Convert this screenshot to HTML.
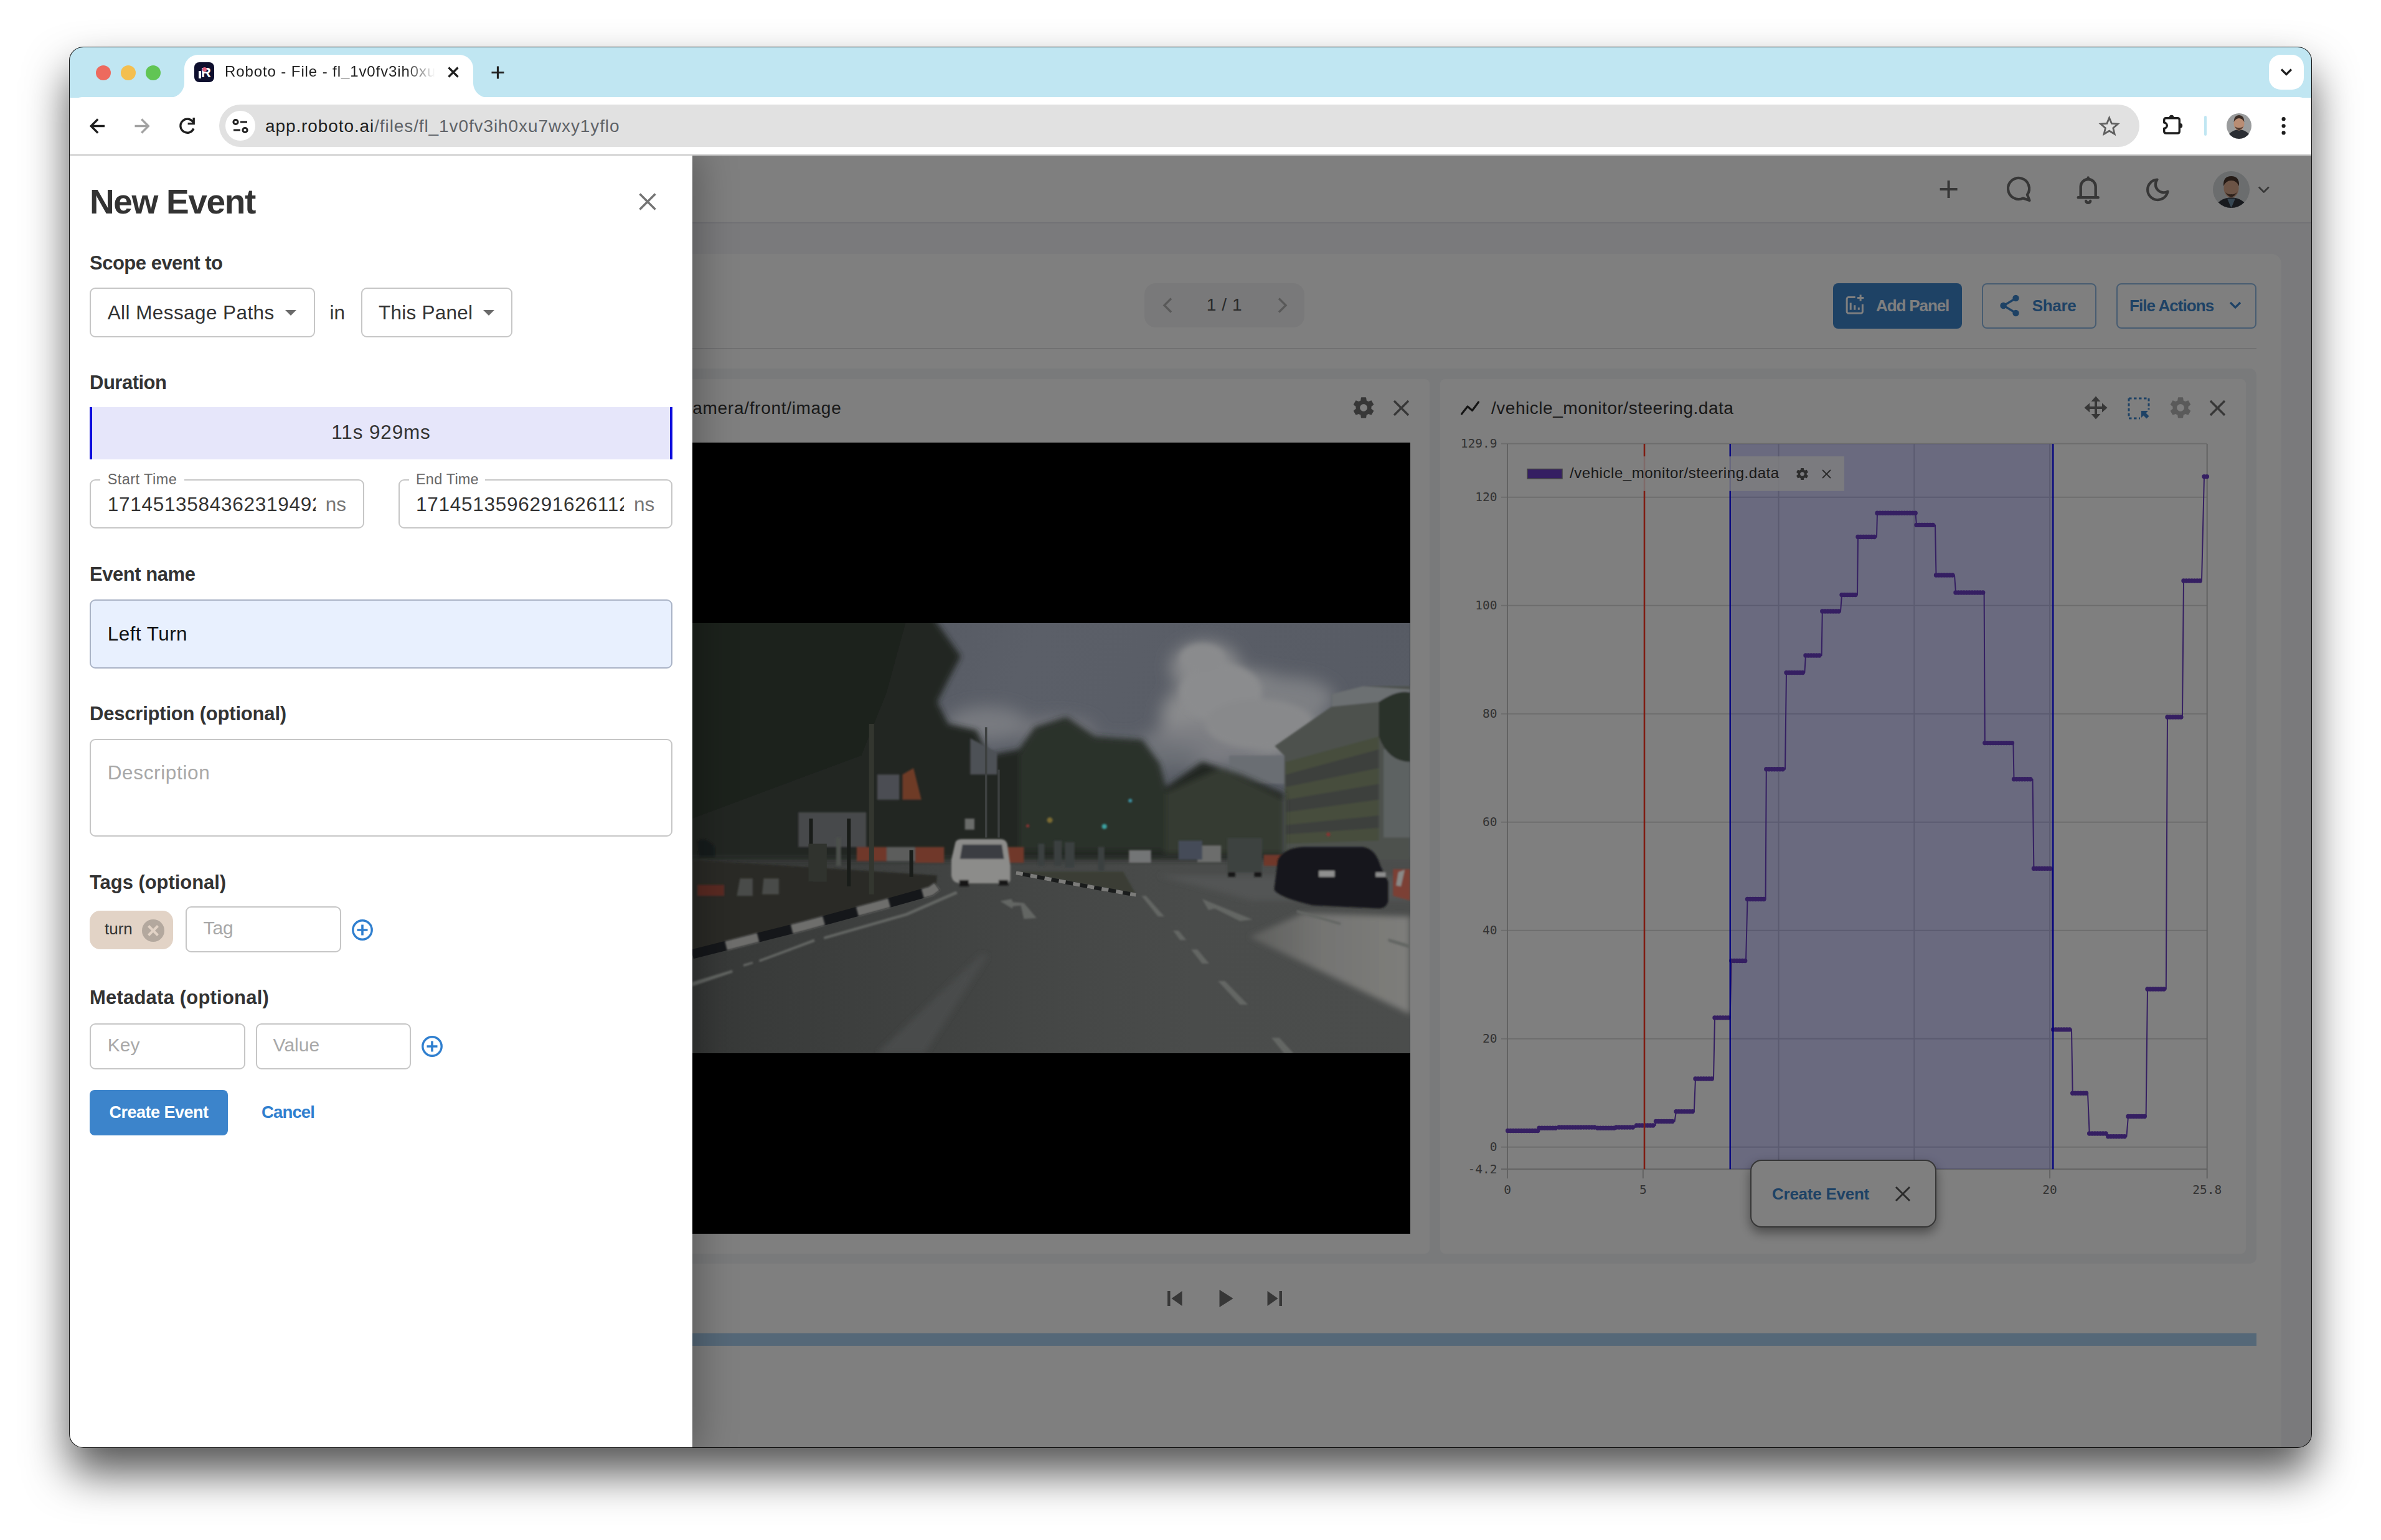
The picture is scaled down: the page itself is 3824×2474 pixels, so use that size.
<!DOCTYPE html>
<html lang="en">
<head>
<meta charset="utf-8">
<title>Roboto - File - fl_1v0fv3ih0xu7wxy1yflo</title>
<style>
*{box-sizing:border-box;margin:0;padding:0}
html,body{width:3824px;height:2474px;overflow:hidden;background:#fff}
body{font-family:"Liberation Sans",Arial,sans-serif;color:#333;position:relative}
.a{position:absolute}
.t{position:absolute;white-space:nowrap;line-height:1}
svg{position:absolute;overflow:visible}
#win{left:112px;top:75px;width:3600px;height:2251px;border-radius:22px;background:#fff;
 box-shadow:0 40px 70px rgba(0,0,0,.67)}
#ring{left:-1px;top:0;width:3602px;height:2251px;border-radius:23px/22px;box-shadow:inset 0 0 0 1px rgba(0,0,0,.88);pointer-events:none;z-index:50}
#clip{left:0;top:0;width:3600px;height:2251px;border-radius:22px;overflow:hidden}
/* ---------- chrome ---------- */
#tabstrip{left:0;top:0;width:3600px;height:82px;background:#c0e6f2}
#toolbar{left:0;top:81px;width:3600px;height:93px;background:#fff;border-radius:20px 20px 0 0}
#tbline{left:0;top:173px;width:3600px;height:2px;background:#c9c9c9}
#tab{left:184px;top:13px;width:464px;height:70px;background:#fff;border-radius:22px 22px 0 0}
#tab:before,#tab:after{content:"";position:absolute;bottom:1px;width:24px;height:24px;background:radial-gradient(circle at 0 0,rgba(255,255,255,0) 23.5px,#fff 24.5px)}
#tab:before{left:-24px}
#tab:after{right:-24px;transform:scaleX(-1)}
.tl{width:24px;height:24px;border-radius:50%;top:29.5px}
#omni{left:240px;top:93px;width:3084px;height:68px;border-radius:34px;background:#e1e1e1}
#tsearch{left:3532px;top:13px;width:56px;height:56px;border-radius:18px;background:#fff}
/* ---------- app (under overlay) ---------- */
#content{left:0;top:175px;width:3600px;height:2076px;overflow:hidden}
#app{left:0;top:0;width:3600px;height:2076px;background:#f4f5f8;overflow:hidden}
#overlay{left:0;top:0;width:3600px;height:2076px;background:rgba(0,0,0,.5)}
/* ---------- dialog ---------- */
#dlg{left:0;top:0;width:1000px;height:2076px;background:#fff;box-shadow:0 0 60px 8px rgba(0,0,0,.3)}
.lbl{font-weight:bold;font-size:31px;color:#333;left:32px}
.box{position:absolute;border:2px solid #c6c6c6;border-radius:9px;background:#fff}
.ph{color:#a8a8a8}
</style>
</head>
<body>
<div id="win" class="a">
  <div id="ring" class="a"></div>
  <div id="clip" class="a">
  <!-- ======= CHROME ======= -->
  <div id="tabstrip" class="a"></div>
  <div id="toolbar" class="a"></div>
  <div id="tbline" class="a"></div>
  <div class="a tl" style="left:42px;background:#ed6a5e"></div>
  <div class="a tl" style="left:82px;background:#f4bf4f"></div>
  <div class="a tl" style="left:122px;background:#61c554"></div>
  <div id="tab" class="a"></div>

  <!-- favicon -->
  <div class="a" style="left:200px;top:25px;width:32px;height:32px;border-radius:8px;background:#0e0f2e"></div>
  <div class="a" style="left:207px;top:39px;width:4px;height:12px;background:#fff"></div>
  <div class="t" style="left:211px;top:31px;font-size:22px;font-weight:bold;color:#fff">R</div>
  <div class="a" style="left:213px;top:33px;width:7px;height:7px;border-radius:50%;background:#e0607e"></div>
  <!-- tab title -->
  <div class="t" id="tabtitle" style="left:249px;top:28.3px;font-size:24px;letter-spacing:.9px;color:#1f1f1f;width:340px;overflow:hidden;-webkit-mask-image:linear-gradient(90deg,#000 290px,transparent 338px);mask-image:linear-gradient(90deg,#000 290px,transparent 338px)">Roboto - File - fl_1v0fv3ih0xu7wxy1yflo</div>
  <svg style="left:0;top:0" width="3600" height="175" viewBox="0 0 3600 175" fill="none" stroke="#1f1f1f" stroke-width="3.4">
    <!-- tab close / new tab -->
    <path d="M608.5 33.5 L623.5 48.5 M623.5 33.5 L608.5 48.5" stroke-width="3.2"/>
    <path d="M677.5 41.5 H697.5 M687.5 31.5 V51.5" stroke-width="3.2"/>
    <!-- tab search chevron -->
    <rect x="3532" y="13" width="56" height="56" rx="19" fill="#fff" stroke="none"/>
    <path d="M3552 36.5 L3560 44.5 L3568 36.5" stroke-width="3.2"/>
    <!-- back / forward / reload -->
    <path d="M56 127.5 H34.5 M45.2 116.5 L34.2 127.5 L45.2 138.5"/>
    <path d="M104.5 127.5 H126 M115.3 116.5 L126.3 127.5 L115.3 138.5" stroke="#a2a2a2"/>
    <path d="M198.3 121.5 A11 11 0 1 0 199 131.5" />
    <path d="M199.2 114 V123.6 H189.6" />
    <!-- omnibox -->
    <rect x="240" y="93" width="3084" height="68" rx="34" fill="#e1e1e1" stroke="none"/>
    <circle cx="274" cy="127" r="24" fill="#fff" stroke="none"/>
    <g stroke-width="3">
      <circle cx="266.5" cy="121" r="3.6"/><path d="M274 121 H285"/>
      <circle cx="281.5" cy="134" r="3.6"/><path d="M263 134 H274"/>
    </g>
    <!-- star -->
    <path d="M3275.6 114.2 L3279.4 123.4 L3289.3 124.2 L3281.8 130.7 L3284.1 140.4 L3275.6 135.2 L3267.1 140.4 L3269.4 130.7 L3261.9 124.2 L3271.8 123.4 Z" stroke="#5f5f5f" stroke-width="2.8" stroke-linejoin="miter"/>
    <!-- extensions puzzle -->
    <path d="M3363.7 122 V117.700 Q3363.7 114.7 3366.7 114.7 H3385.3 Q3388.3 114.7 3388.3 117.7 V136 Q3388.3 139 3385.3 139 H3366.7 Q3363.7 139 3363.7 136 V131.2 A4.6 4.6 0 0 0 3363.7 122 Z" stroke-linejoin="round" stroke-width="3.4"/>
    <path d="M3371.8 113.600 A3.8 3.8 0 0 1 3379.4 113.600Z M3389.4 123.1 A3.8 3.8 0 0 1 3389.4 130.7Z" fill="#1f1f1f" stroke="none"/>
    <!-- divider -->
    <rect x="3428" y="111" width="4" height="32" rx="2" fill="#c0e6f2" stroke="none"/>
    <!-- chrome avatar -->
    <circle cx="3484" cy="127" r="20" fill="#9a9c9d" stroke="none"/>
    <path d="M3468 140 Q3484 126 3500 140 A20 20 0 0 1 3468 140Z" fill="#2a2d33" stroke="none"/>
    <ellipse cx="3484" cy="124" rx="8.5" ry="10.5" fill="#b98d74" stroke="none"/>
    <path d="M3475.5 121 Q3476 110 3484 110 Q3492 110 3492.5 121 Q3489 115 3484 115 Q3479 115 3475.5 121Z" fill="#3a2c25" stroke="none"/>
    <path d="M3477 128 Q3484 140 3491 128 Q3484 133 3477 128Z" fill="#4a372e" stroke="none"/>
    <!-- menu dots -->
    <g fill="#1f1f1f" stroke="none"><circle cx="3555.6" cy="116.2" r="3.1"/><circle cx="3555.6" cy="127.3" r="3.1"/><circle cx="3555.6" cy="138.4" r="3.1"/></g>
  </svg>
  <div class="t" style="left:314px;top:113.5px;font-size:28px;letter-spacing:.9px;color:#1f1f1f">app.roboto.ai<span style="color:#5f6368">/files/fl_1v0fv3ih0xu7wxy1yflo</span></div>

  <!-- ======= APP ======= -->
  <div id="content" class="a">
  <div id="app" class="a">
<div class="a" style="left:0.0px;top:0.0px;width:3600.0px;height:109.0px;background:#fff;border-bottom:2px solid #e4e5ec"></div>
<svg style="left:0;top:0" width="3600" height="108" viewBox="0 0 3600 108" fill="none" stroke="#6e6e6e" stroke-width="4" stroke-linecap="round" stroke-linejoin="round">
<path d="M3017.6 40 V68 M3003.6 54 H3031.6" stroke-linecap="butt" stroke-width="4"/>
<path d="M3143.9 62.8 A17 17 0 1 0 3137.2 68.4 L3147.5 72 Z" stroke-width="4.2"/>
<path d="M3225.7 67.200 H3257.7 M3229.7 67.200 V50 A12 12 0 0 1 3253.7 50 V67.200 M3241.7 38 V35.5 M3238.2 73 A3.6 3.6 0 0 0 3245.2 73" stroke-width="4.400"/>
<path d="M3352.5 38.5 A16.3 16.3 0 1 0 3369.5 57.5 A13 13 0 0 1 3352.5 38.5 Z" stroke-width="4.200"/>
<path d="M3515.8 50.5 L3523.8 58.5 L3531.8 50.5" stroke-width="2.6" stroke-linecap="butt"/>
</svg>
<svg style="left:3442px;top:24.5px" width="59" height="59" viewBox="0 0 59 59">
<defs><clipPath id="avc"><circle cx="29.5" cy="29.5" r="29.5"/></clipPath></defs>
<g clip-path="url(#avc)"><rect width="59" height="59" fill="#d6dadc"/>
<path d="M4 59 Q8 44 29.5 42 Q51 44 55 59Z" fill="#30343c"/>
<path d="M23 44 L29.5 59 L36 44Z" fill="#6f8fa6"/>
<ellipse cx="29.5" cy="27" rx="12" ry="15.5" fill="#d9a88c"/>
<path d="M17 24 Q16 8 29.5 8 Q43 8 42 24 Q38 15 29.5 15 Q21 15 17 24Z" fill="#4a362c"/>
<path d="M18.5 31 Q29.5 52 40.5 31 Q37 38 29.5 37 Q22 38 18.5 31Z" fill="#5b4336"/>
</g></svg>
<div class="a" style="left:560.0px;top:158.0px;width:2992.0px;height:2142.0px;background:#fff;border-radius:16px"></div>
<div class="a" style="left:1726.0px;top:204.6px;width:257.0px;height:71.4px;background:#f3f3f4;border-radius:18px"></div>
<svg style="left:1726px;top:204px" width="257" height="72" viewBox="0 0 257 72" fill="none" stroke="#b2b2b2" stroke-width="3.4"><path d="M43 25.5 L32 36.5 L43 47.5"/><path d="M216 25.5 L227 36.5 L216 47.5"/></svg>
<div class="t" style="left:1854.5px;transform:translateX(-50%);top:225.8px;font-size:28px;color:#555;letter-spacing:.6px">1 / 1</div>
<div class="a" style="left:2832.0px;top:205.0px;width:206.8px;height:72.5px;background:#3c84cb;border-radius:8px"></div>
<svg style="left:2849px;top:222px" width="35.5" height="35.5" viewBox="0 0 38 38" fill="none" stroke="#fff" stroke-width="3.2">
<path d="M20 6 H8.5 A3 3 0 0 0 5.500 9 V30.5 A3 3 0 0 0 8.5 33.500 H29.500 A3 3 0 0 0 32.500 30.5 V18"/>
<path d="M12 27.5 V15.500 M19 27.5 V19.5 M26 27.5 V23.5"/><path d="M29 1.500 V12.500 M23.500 7 H34.500"/></svg>
<div class="t" style="left:2901.0px;top:228.3px;font-size:26px;color:#fff;font-weight:bold;letter-spacing:-1.1px">Add Panel</div>
<div class="a" style="left:3071.0px;top:205.0px;width:183.5px;height:72.5px;border:2px solid #8fb9e3;border-radius:8px;background:#fff"></div>
<svg style="left:3098px;top:222px" width="36" height="38" viewBox="0 0 36 38" fill="#3c84cb" stroke="#3c84cb" stroke-width="3.4">
<path d="M27 7.5 L8 19 L27 30.5" fill="none"/><circle cx="27.5" cy="7" r="4" stroke="none" /><circle cx="27.5" cy="7" r="5.2" stroke="none"/><circle cx="7.5" cy="19" r="5.2" stroke="none"/><circle cx="27.5" cy="31" r="5.2" stroke="none"/></svg>
<div class="t" style="left:3151.7px;top:228.3px;font-size:26px;color:#3c84cb;font-weight:bold;letter-spacing:-.33px">Share</div>
<div class="a" style="left:3287.0px;top:205.0px;width:224.5px;height:72.5px;border:2px solid #8fb9e3;border-radius:8px;background:#fff"></div>
<div class="t" style="left:3308.0px;top:228.3px;font-size:26px;color:#3c84cb;font-weight:bold;letter-spacing:-.93px">File Actions</div>
<svg style="left:3466px;top:232px" width="24" height="16" viewBox="0 0 24 16" fill="none" stroke="#3c84cb" stroke-width="3.2"><path d="M4 4 L12 12 L20 4"/></svg>
<div class="a" style="left:560.0px;top:309.0px;width:2952.0px;height:2.0px;background:#e2e2e4"></div>
<div class="a" style="left:600.0px;top:342.0px;width:2912.0px;height:1438.0px;background:#f3f4f7;border-radius:10px"></div>
<div class="a" style="left:616.0px;top:359.0px;width:1568.0px;height:1404.6px;background:#fff;border-radius:8px"></div>
<div class="t" style="left:1000.3px;top:391.8px;font-size:28px;color:#333;letter-spacing:.7px">amera/front/image</div>
<div class="t" style="right:2600.0px;top:391.8px;font-size:28px;color:#333;letter-spacing:.7px">/c</div>
<svg style="left:2058.0px;top:385.0px" width="40" height="40" viewBox="0 0 24 24"><path fill="#6e6e6e" d="M19.43 12.98c.04-.32.07-.64.07-.98s-.03-.66-.07-.98l2.11-1.65c.19-.15.24-.42.12-.64l-2-3.46c-.12-.22-.39-.3-.61-.22l-2.49 1c-.52-.4-1.08-.73-1.69-.98l-.38-2.65C14.46 2.18 14.25 2 14 2h-4c-.25 0-.46.18-.49.42l-.38 2.65c-.61.25-1.17.59-1.69.98l-2.49-1c-.23-.09-.49 0-.61.22l-2 3.46c-.13.22-.07.49.12.64l2.11 1.65c-.04.32-.07.65-.07.98s.03.66.07.98l-2.11 1.65c-.19.15-.24.42-.12.64l2 3.46c.12.22.39.3.61.22l2.49-1c.52.4 1.08.73 1.69.98l.38 2.65c.03.24.24.42.49.42h4c.25 0 .46-.18.49-.42l.38-2.65c.61-.25 1.17-.59 1.69-.98l2.49 1c.23.09.49 0 .61-.22l2-3.46c.12-.22.07-.49-.12-.64l-2.11-1.65zM12 15.5c-1.93 0-3.5-1.57-3.5-3.5s1.570-3.5 3.5-3.500 3.500 1.570 3.500 3.500-1.570 3.500-3.500 3.500z"/></svg>
<svg style="left:2126.5px;top:393.5px" width="23.0" height="23.0" viewBox="0 0 23.0 23.0"><path d="M0 0 L23.0 23.0 M23.0 0 L0 23.0" stroke="#6e6e6e" stroke-width="3.4" fill="none"/></svg>
<div class="a" style="left:616.0px;top:460.6px;width:1536.6px;height:1271.4px;background:#000"></div>
<div class="a" style="left:2201.0px;top:359.0px;width:1294.0px;height:1404.6px;background:#fff;border-radius:8px"></div>
<svg style="left:2232px;top:390px" width="34" height="30" viewBox="0 0 34 30" fill="none" stroke="#2b2b2b" stroke-width="3.2" stroke-linejoin="round" stroke-linecap="round"><path d="M3.5 25 L13 13 L20.5 19.5 L30.500 6"/></svg>
<div class="t" style="left:2283.0px;top:391.8px;font-size:28px;color:#333;letter-spacing:.53px">/vehicle_monitor/steering.data</div>
<svg style="left:2234px;top:385px" width="0" height="0"></svg>
<svg style="left:3234px;top:385px" width="40" height="40" viewBox="0 0 40 40" fill="#6e6e6e" stroke="none">
<path d="M20 1.5 L27.5 10 H22 V18 H30 V12.5 L38.5 20 L30 27.5 V22 H22 V30 H27.5 L20 38.500 L12.500 30 H18 V22 H10 V27.500 L1.500 20 L10 12.500 V18 H18 V10 H12.500 Z"/></svg>
<svg style="left:3305px;top:388px" width="36" height="36" viewBox="0 0 36 36" fill="none" stroke="#3c84cb" stroke-width="3">
<path d="M2 2 H34 V20 M2 2 V34 H20" stroke-dasharray="4.500 3.500"/><path d="M22 22 H33 L29.500 25.5 L34.500 30.500 L30.500 34.500 L25.500 29.500 L22 33 Z" fill="#3c84cb" stroke="none"/></svg>
<svg style="left:3369.8px;top:385.0px" width="40" height="40" viewBox="0 0 24 24"><path fill="#b4b4b4" d="M19.43 12.98c.04-.32.07-.64.07-.98s-.03-.66-.07-.98l2.11-1.65c.19-.15.24-.42.12-.64l-2-3.46c-.12-.22-.39-.3-.61-.22l-2.49 1c-.52-.4-1.08-.73-1.69-.98l-.38-2.65C14.46 2.18 14.25 2 14 2h-4c-.25 0-.46.18-.49.42l-.38 2.65c-.61.25-1.17.59-1.69.98l-2.49-1c-.23-.09-.49 0-.61.22l-2 3.46c-.13.22-.07.49.12.64l2.11 1.65c-.04.32-.07.65-.07.98s.03.66.07.98l-2.11 1.65c-.19.15-.24.42-.12.64l2 3.46c.12.22.39.3.61.22l2.49-1c.52.4 1.08.73 1.69.98l.38 2.65c.03.24.24.42.49.42h4c.25 0 .46-.18.49-.42l.38-2.65c.61-.25 1.17-.59 1.69-.98l2.49 1c.23.09.49 0 .61-.22l2-3.46c.12-.22.07-.49-.12-.64l-2.11-1.65zM12 15.5c-1.93 0-3.5-1.57-3.5-3.5s1.570-3.5 3.5-3.500 3.500 1.570 3.500 3.500-1.570 3.500-3.500 3.500z"/></svg>
<svg style="left:3438.3px;top:393.5px" width="23.0" height="23.0" viewBox="0 0 23.0 23.0"><path d="M0 0 L23.0 23.0 M23.0 0 L0 23.0" stroke="#6e6e6e" stroke-width="3.4" fill="none"/></svg>
<svg style="left:0;top:0" width="3600" height="2076" viewBox="0 0 3600 2076" font-family="DejaVu Sans Mono, Liberation Mono, monospace" font-size="19.5" fill="#666">
<path d="M2299.0 462.7 H3432.7" stroke="#dadada" stroke-width="2"/>
<path d="M2299.0 548.8 H3432.7" stroke="#dadada" stroke-width="2"/>
<path d="M2299.0 722.8 H3432.7" stroke="#dadada" stroke-width="2"/>
<path d="M2299.0 896.8 H3432.7" stroke="#dadada" stroke-width="2"/>
<path d="M2299.0 1070.8 H3432.7" stroke="#dadada" stroke-width="2"/>
<path d="M2299.0 1244.8 H3432.7" stroke="#dadada" stroke-width="2"/>
<path d="M2299.0 1418.8 H3432.7" stroke="#dadada" stroke-width="2"/>
<path d="M2299.0 1592.8 H3432.7" stroke="#dadada" stroke-width="2"/>
<path d="M2744.5 463.0 V1628.2" stroke="#dadada" stroke-width="2"/>
<path d="M2962.3 463.0 V1628.2" stroke="#dadada" stroke-width="2"/>
<path d="M3180.1 463.0 V1628.2" stroke="#dadada" stroke-width="2"/>
<path d="M2309.0 463.0 V1643.2 M2299.0 1628.2 H3432.7 M3432.7 463.0 V1643.2" stroke="#c4c4c4" stroke-width="2" fill="none"/>
<path d="M2526.8 1628.2 V1643.2" stroke="#c4c4c4" stroke-width="2"/>
<path d="M3180.1 1628.2 V1643.2" stroke="#c4c4c4" stroke-width="2"/>
<rect x="2666.7" y="463.0" width="518.6" height="1165.2" fill="rgba(40,40,255,.2)"/>
<path d="M2309.6 1566.5 L2358.0 1566.5 L2360.0 1562.2 L2390.0 1562.2 L2392.0 1561.0 L2452.0 1561.0 L2454.0 1562.2 L2482.0 1562.2 L2484.0 1561.0 L2514.0 1561.0 L2516.6 1558.0 L2546.6 1558.0 L2547.5 1551.5 L2577.5 1551.5 L2580.0 1535.6 L2608.8 1535.6 L2611.0 1483.0 L2640.0 1483.0 L2642.0 1385.0 L2666.6 1385.0 L2668.8 1293.5 L2692.0 1293.5 L2694.5 1194.5 L2723.6 1194.5 L2724.8 985.7 L2755.0 985.7 L2757.0 830.6 L2786.3 830.6 L2788.0 803.0 L2813.6 803.0 L2814.8 732.0 L2844.0 732.0 L2846.0 705.6 L2871.0 705.6 L2872.0 612.5 L2902.0 612.5 L2903.0 574.3 L2964.4 574.3 L2966.0 593.4 L2996.0 593.4 L2997.5 674.0 L3027.0 674.0 L3029.0 702.0 L3074.6 702.0 L3075.8 943.6 L3121.4 943.6 L3122.5 1001.7 L3152.5 1001.7 L3154.4 1145.3 L3184.0 1145.3 L3185.5 1403.9 L3215.0 1403.9 L3216.7 1506.2 L3241.0 1506.2 L3243.7 1571.0 L3272.3 1571.0 L3273.8 1575.7 L3303.4 1575.7 L3306.0 1543.5 L3334.6 1543.5 L3337.0 1339.0 L3366.8 1339.0 L3369.0 902.0 L3393.0 902.0 L3395.0 683.0 L3424.0 683.0 L3428.0 515.6 L3433.0 515.6" stroke="#6a3ec4" stroke-width="2" fill="none" stroke-linejoin="round"/>
<path d="M2309.6 1566.5 H2358.0 M2360.0 1562.2 H2390.0 M2392.0 1561.0 H2452.0 M2454.0 1562.2 H2482.0 M2484.0 1561.0 H2514.0 M2516.6 1558.0 H2546.6 M2547.5 1551.5 H2577.5 M2580.0 1535.6 H2608.8 M2611.0 1483.0 H2640.0 M2642.0 1385.0 H2666.6 M2668.8 1293.5 H2692.0 M2694.5 1194.5 H2723.6 M2724.8 985.7 H2755.0 M2757.0 830.6 H2786.3 M2788.0 803.0 H2813.6 M2814.8 732.0 H2844.0 M2846.0 705.6 H2871.0 M2872.0 612.5 H2902.0 M2903.0 574.3 H2964.4 M2966.0 593.4 H2996.0 M2997.5 674.0 H3027.0 M3029.0 702.0 H3074.6 M3075.8 943.6 H3121.4 M3122.5 1001.7 H3152.5 M3154.4 1145.3 H3184.0 M3185.5 1403.9 H3215.0 M3216.7 1506.2 H3241.0 M3243.7 1571.0 H3272.3 M3273.8 1575.7 H3303.4 M3306.0 1543.5 H3334.6 M3337.0 1339.0 H3366.8 M3369.0 902.0 H3393.0 M3395.0 683.0 H3424.0 M3428.0 515.6 H3433.0" stroke="#6a3ec4" stroke-width="7.4" fill="none" stroke-linecap="round" stroke-dasharray="0.01 4.36"/>
<path d="M2529.0 463.0 V1628.2" stroke="#ff3a26" stroke-width="2.6"/>
<path d="M2666.7 463.0 V1628.2 M3185.3 463.0 V1628.2" stroke="#0000ff" stroke-width="2.3"/>
<rect x="2326.0" y="483.2" width="524.0" height="55.6" fill="rgba(255,255,255,.8)"/>
<rect x="2341.0" y="503.5" width="56" height="15.5" fill="#6a3ec4" stroke="#8a8a8a" stroke-width="1.5"/>
<text x="2409.0" y="518.3" font-family="Liberation Sans, sans-serif" font-size="24" fill="#333" letter-spacing=".55">/vehicle_monitor/steering.data</text>
<text x="2292.4" y="468.7" text-anchor="end">129.9</text>
<text x="2292.4" y="554.8" text-anchor="end">120</text>
<text x="2292.4" y="728.8" text-anchor="end">100</text>
<text x="2292.4" y="902.8" text-anchor="end">80</text>
<text x="2292.4" y="1076.8" text-anchor="end">60</text>
<text x="2292.4" y="1250.8" text-anchor="end">40</text>
<text x="2292.4" y="1424.8" text-anchor="end">20</text>
<text x="2292.4" y="1598.8" text-anchor="end">0</text>
<text x="2292.4" y="1635.3" text-anchor="end">-4.2</text>
<text x="2309.0" y="1668.0" text-anchor="middle">0</text>
<text x="2526.8" y="1668.0" text-anchor="middle">5</text>
<text x="3180.1" y="1668.0" text-anchor="middle">20</text>
<text x="3432.7" y="1668.0" text-anchor="middle">25.8</text>
</svg>
<svg style="left:2770.5px;top:499.5px" width="23" height="23" viewBox="0 0 24 24"><path fill="#5a5a5a" d="M19.43 12.98c.04-.32.07-.64.07-.98s-.03-.66-.07-.98l2.11-1.65c.19-.15.24-.42.12-.64l-2-3.46c-.12-.22-.39-.3-.61-.22l-2.49 1c-.52-.4-1.08-.73-1.69-.98l-.38-2.65C14.46 2.18 14.25 2 14 2h-4c-.25 0-.46.18-.49.42l-.38 2.65c-.61.25-1.17.59-1.69.98l-2.49-1c-.23-.09-.49 0-.61.22l-2 3.46c-.13.22-.07.49.12.64l2.11 1.65c-.04.32-.07.65-.07.98s.03.66.07.98l-2.11 1.65c-.19.15-.24.42-.12.64l2 3.46c.12.22.39.3.61.22l2.49-1c.52.4 1.08.73 1.69.98l.38 2.65c.03.24.24.42.49.42h4c.25 0 .46-.18.49-.42l.38-2.65c.61-.25 1.17-.59 1.69-.98l2.49 1c.23.09.49 0 .61-.22l2-3.46c.12-.22.07-.49-.12-.64l-2.11-1.65zM12 15.5c-1.93 0-3.5-1.57-3.5-3.5s1.570-3.5 3.5-3.500 3.500 1.570 3.500 3.500-1.570 3.500-3.500 3.500z"/></svg>
<svg style="left:2815.3px;top:504.5px" width="13.0" height="13.0" viewBox="0 0 13.0 13.0"><path d="M0 0 L13.0 13.0 M13.0 0 L0 13.0" stroke="#5a5a5a" stroke-width="2" fill="none"/></svg>
<svg style="left:1750px;top:1816px" width="210" height="40" viewBox="0 0 210 40" fill="#6e6e6e">
<rect x="13" y="8" width="4.5" height="24"/><path d="M36.500 8 V32 L19.500 20 Z"/>
<path d="M96.500 6 V34 L118.500 20 Z"/>
<path d="M173.500 8 V32 L190.500 20 Z"/><rect x="192.500" y="8" width="4.500" height="24"/></svg>
<div class="a" style="left:560.0px;top:1892.0px;width:2952.0px;height:20.0px;background:#aad0f0"></div>
<div class="a" style="left:2699.3px;top:1613.0px;width:298.4px;height:108.6px;background:#fff;border:2.5px solid #6c6c6c;border-radius:18px;box-shadow:0 8px 18px rgba(0,0,0,.42)"></div>
<div class="t" style="left:2734.0px;top:1654.7px;font-size:26px;color:#3c84cb;font-weight:bold;letter-spacing:-.25px">Create Event</div>
<svg style="left:2932.6px;top:1656.7px" width="22" height="22" viewBox="0 0 22 22"><path d="M0 0 L22 22 M22 0 L0 22" stroke="#555" stroke-width="3" fill="none"/></svg>
  </div>
  <div id="overlay" class="a"></div>
<svg style="left:1000px;top:750.5px;overflow:hidden" width="1152.6" height="691.5" viewBox="24 80 2275 1365" preserveAspectRatio="none">
<defs>
<filter id="b1" x="-20%" y="-20%" width="140%" height="140%"><feGaussianBlur stdDeviation="3"/></filter>
<filter id="b2" x="-20%" y="-20%" width="140%" height="140%"><feGaussianBlur stdDeviation="9"/></filter>
<filter id="b3" x="-30%" y="-30%" width="160%" height="160%"><feGaussianBlur stdDeviation="26"/></filter>
<linearGradient id="sky" x1="0" y1="0" x2="1" y2="0.3"><stop offset="0" stop-color="#50545d"/><stop offset=".45" stop-color="#5b5f68"/><stop offset="1" stop-color="#575b64"/></linearGradient>
<linearGradient id="road" x1="0" y1="0" x2="1" y2="0"><stop offset="0" stop-color="#363837"/><stop offset=".35" stop-color="#414342"/><stop offset=".7" stop-color="#4a4c4b"/><stop offset="1" stop-color="#4b4d4c"/></linearGradient>
<linearGradient id="sun" x1="0" y1="0" x2="1" y2="0"><stop offset="0" stop-color="#5e5f5d"/><stop offset=".45" stop-color="#747472"/><stop offset="1" stop-color="#7e7e7b"/></linearGradient>
</defs>
<rect x="24" y="80" width="2275" height="1365" fill="url(#sky)"/>
<!-- clouds -->
<g filter="url(#b3)">
<ellipse cx="1760" cy="380" rx="250" ry="150" fill="#8a8b8d"/>
<ellipse cx="1650" cy="220" rx="110" ry="80" fill="#8a8b8d"/>
<ellipse cx="1900" cy="320" rx="160" ry="70" fill="#7d7f83"/>
<ellipse cx="1640" cy="470" rx="200" ry="70" fill="#7b7d82"/>
<ellipse cx="960" cy="400" rx="130" ry="55" fill="#787a80"/>
<ellipse cx="1180" cy="420" rx="120" ry="40" fill="#74767c"/>
<ellipse cx="1350" cy="500" rx="300" ry="50" fill="#6c6f76"/>
</g>
<g filter="url(#b2)"><ellipse cx="1700" cy="300" rx="130" ry="90" fill="#8b8c8e"/><ellipse cx="1820" cy="400" rx="170" ry="80" fill="#88898b"/><ellipse cx="1640" cy="190" rx="70" ry="45" fill="#8a8b8d"/></g>
<!-- road -->
<path d="M24 820 H2299 V1445 H24Z" fill="url(#road)"/>
<!-- sunlit patch -->
<path d="M1790 1075 L1960 1000 L2299 1010 V1320 L2050 1200Z" fill="url(#sun)" filter="url(#b2)"/>
<path d="M1500 880 H2299 V960 H1800Z" fill="#535554" filter="url(#b2)"/>
<!-- building right -->
<g filter="url(#b1)">
<path d="M1870 470 L2050 345 V305 L2150 280 H2299 V830 H1900 V500Z" fill="#4d514d"/>
<path d="M1870 470 L2050 345 L2299 320 V290 L2150 280 L2050 305 V345" fill="#6c6f72"/>
<path d="M1905 520 L2200 440 V480 L1905 560Z M1905 600 L2200 540 V590 L1905 640Z M1905 680 L2200 640 V690 L1905 720Z M1905 750 L2200 730 V770 L1905 780Z" fill="#464e3c"/>
<path d="M2215 480 H2299 V760 H2215Z" fill="#5d6262"/>
<path d="M1905 560 L2200 480 V540 L1905 600Z M1905 640 L2200 590 V640 L1905 680Z M1905 720 L2200 690 V730 L1905 750Z" fill="#3d413e"/>
<path d="M1725 500 H1900 V590 H1725Z" fill="#6a6e73"/>
<path d="M2200 330 Q2260 290 2299 300 V520 Q2230 520 2200 440Z" fill="#2a302a"/>
</g>
<!-- trees -->
<g filter="url(#b2)">
<path d="M-30 30 H770 L800 80 L875 185 L835 260 L800 330 L835 400 L925 420 L960 500 L1060 480 L1110 410 L1210 378 L1300 440 L1450 450 L1505 525 L1525 600 L1640 520 L1760 560 L1900 620 V830 H-30Z" fill="#232724"/>
<path d="M-30 30 H710 L700 80 L640 300 L560 500 L-30 720Z" fill="#1e221e"/>
<path d="M1520 620 L1700 540 L1900 640 V810 H1520Z" fill="#343b33"/>
<path d="M1060 500 L1110 420 L1210 385 L1300 445 L1450 455 L1505 530 L1525 610 V800 H1060Z" fill="#2c332c"/>
</g>
<!-- under-tree bright bits -->
<g filter="url(#b1)">
<path d="M360 680 H575 V790 H360Z" fill="#46484b"/>
<path d="M610 560 H680 V640 H610Z" fill="#4c4e52"/>
<path d="M905 445 L990 490 V560 H905Z" fill="#4e5156"/>
<path d="M690 560 L725 540 L750 640 H690Z" fill="#6e3a26"/>
<path d="M545 790 H640 V835 H545Z M730 790 H822 V840 H730Z M1020 790 H1075 V840 H1020Z M1835 815 H1905 V850 H1835Z" fill="#70382a"/>
<path d="M640 790 H730 V835 H640Z" fill="#5b5d5c"/>
</g>
<!-- left grass + curb -->
<path d="M24 830 L800 880 L795 925 L24 1135Z" fill="#292c27" filter="url(#b1)"/>
<path d="M24 1130 L380 1040 L620 975 L780 930 L800 915" stroke="#15171a" stroke-width="30" fill="none"/>
<path d="M24 1130 L380 1040 L620 975 L780 930 L800 915" stroke="#6e6e6c" stroke-width="30" stroke-dasharray="105 110" stroke-dashoffset="-110" fill="none" filter="url(#b1)"/>
<!-- centre island -->
<path d="M1050 868 L1390 868 L1430 940 L1250 905Z" fill="#3b3d35" filter="url(#b1)"/>
<path d="M1050 872 L1250 910 L1430 942" stroke="#1a1c1c" stroke-width="12" fill="none"/>
<path d="M1050 872 L1250 910 L1430 942" stroke="#7c7c7a" stroke-width="12" stroke-dasharray="22 24" fill="none"/>
<!-- poles -->
<path d="M592 400 V940" stroke="#33362f" stroke-width="16"/>
<path d="M955 410 V760 M995 545 V760" stroke="#3d4040" stroke-width="7"/>
<path d="M400 700 V900 M520 700 V915 M718 800 V885" stroke="#191c19" stroke-width="12"/>
<path d="M392 780 H450 V900 H392Z" fill="#30332e"/>
<!-- lane markings -->
<g fill="#646664" filter="url(#b1)">
<path d="M1000 962 L1035 955 L1040 965 L1075 968 L1115 1015 L1075 1018 L1065 975 L1040 978 L1038 985Z"/>
<path d="M1640 955 L1690 975 L1800 1020 L1760 1025 L1680 985 L1660 990Z"/>
<path d="M1448 945 L1462 945 L1520 1010 L1500 1010Z M1548 1055 L1565 1055 L1590 1085 L1570 1085Z M1605 1115 L1625 1115 L1662 1160 L1640 1160Z M1690 1215 L1712 1215 L1785 1290 L1760 1290Z M1860 1395 L1885 1395 L1930 1445 L1900 1445Z"/>
<path d="M24 1218 L150 1180 L152 1188 L24 1232Z M185 1162 L215 1154 L216 1160 L187 1169Z M235 1148 L410 1082 L412 1090 L237 1155Z M440 1075 L700 1000 L860 930 L865 938 L705 1008 L442 1083Z"/>
<path d="M2230 1080 L2299 1100 V1112 L2230 1090Z M1940 990 L2080 1030 L2078 1038 L1940 998Z"/>
</g>
<path d="M940 1130 L610 1445 H760 L960 1135Z" fill="#4a4c4b" filter="url(#b2)"/>
<!-- vehicles -->
<g filter="url(#b1)">
<path d="M858 775 Q862 765 880 765 H1000 Q1018 765 1022 780 L1032 850 V895 Q1030 905 1015 905 H875 Q848 905 845 880 V830Z" fill="#8c8c8a"/>
<path d="M880 782 H1005 L1012 828 H872Z" fill="#3b3e42"/>
<path d="M870 895 H900 V915 H870Z M995 895 H1025 V912 H995Z" fill="#141615"/>
<path d="M1408 800 H1478 V840 H1408Z" fill="#737476"/>
<path d="M1720 762 H1830 V870 H1720Z" fill="#3e4240"/>
<path d="M1722 870 H1745 V885 H1722Z M1805 870 H1828 V885 H1805Z" fill="#151716"/>
<path d="M1625 785 H1700 V838 H1625Z" fill="#6c6d6c"/>
<path d="M1565 770 H1640 V830 H1565Z" fill="#444b58"/>
<path d="M1880 830 Q1900 792 1960 790 H2150 Q2190 795 2205 850 L2230 900 V960 Q2225 985 2200 985 L1990 975 Q1880 950 1868 925Z" fill="#15171b"/>
<path d="M2010 865 H2060 V885 H2010Z M2190 870 H2222 V885 H2190Z" fill="#8f8f8f"/>
<path d="M2245 860 H2299 V960 L2245 945Z" fill="#7b4034"/>
<path d="M2262 870 L2282 862 L2270 915 L2255 912Z" fill="#8a8a88"/>
<path d="M40 770 Q70 755 95 790 V820 H45Z" fill="#181a1a"/>
<path d="M175 890 H215 V945 H165Z M250 890 H298 V940 H245Z" fill="#4a4c48"/>
<path d="M40 910 H125 V945 H40Z" fill="#5a2c22"/>
</g>
<!-- pedestrians & lights -->
<g filter="url(#b1)">
<path d="M1120 780 H1140 V850 H1120Z M1170 770 H1195 V850 H1170Z M1205 775 H1235 V855 H1205Z M1310 790 H1330 V865 H1310Z" fill="#3a3f40"/>
<path d="M480 760 H495 V850 H480Z" fill="#4c4f4c"/>
<circle cx="1330" cy="725" r="8" fill="#3aa0a0"/><circle cx="1412" cy="643" r="6" fill="#3a8fa0"/>
<circle cx="1087" cy="723" r="5" fill="#8a3030"/><circle cx="2040" cy="750" r="6" fill="#8a3030"/><circle cx="1157" cy="705" r="9" fill="#7a6a30"/>
<path d="M888 700 H918 V735 H888Z" fill="#6a6c6a"/>
</g>
</svg>
  <div id="dlg" class="a">
<div class="t" style="left:32.0px;top:47.0px;font-size:55px;font-weight:bold;color:#333;letter-spacing:-1.35px">New Event</div>
<svg style="left:913.5px;top:60px" width="28" height="28" viewBox="0 0 28 28"><path d="M1.5 1.5 L26.5 26.5 M26.5 1.5 L1.5 26.5" stroke="#757575" stroke-width="3.6" fill="none"/></svg>
<div class="t lbl" style="left:32.0px;top:156.8px;font-size:31px;letter-spacing:-0.5px">Scope event to</div>
<div class="box" style="left:32.0px;top:212.4px;width:362.0px;height:79.3px;"></div>
<div class="t" style="left:60.7px;top:236.9px;font-size:31.5px;color:#333;letter-spacing:.42px">All Message Paths</div>
<svg style="left:346px;top:247.5px" width="18" height="9" viewBox="0 0 18 9"><path d="M0 0 H18 L9 9Z" fill="#6b6b6b"/></svg>
<div class="t" style="left:417.5px;top:236.9px;font-size:31.5px;color:#333">in</div>
<div class="box" style="left:468.2px;top:212.4px;width:242.5px;height:79.3px;"></div>
<div class="t" style="left:496.0px;top:236.9px;font-size:31.5px;color:#333;letter-spacing:.25px">This Panel</div>
<svg style="left:664px;top:247.5px" width="18" height="9" viewBox="0 0 18 9"><path d="M0 0 H18 L9 9Z" fill="#6b6b6b"/></svg>
<div class="t lbl" style="left:32.0px;top:348.8px;font-size:31px;letter-spacing:-0.5px">Duration</div>
<div class="a" style="left:32.0px;top:404.0px;width:936.0px;height:83.7px;background:#e6e6fa;border-left:4px solid #0d0ddd;border-right:4px solid #0d0ddd"></div>
<div class="t" style="left:500.0px;transform:translateX(-50%);top:429.3px;font-size:31.5px;color:#333;letter-spacing:.85px">11s 929ms</div>
<div class="box" style="left:32.0px;top:520.2px;width:440.5px;height:79.2px;"></div>
<div class="a" style="left:49.0px;top:515.0px;width:134.5px;height:15.0px;background:#fff"></div>
<div class="t" style="left:60.7px;top:508.6px;font-size:23.5px;color:#666;letter-spacing:.45px">Start Time</div>
<div class="t" style="left:60.7px;top:545.3px;font-size:31.5px;color:#333;width:334px;overflow:hidden;letter-spacing:.72px">1714513584362319492</div>
<div class="t" style="left:410.7px;top:545.3px;font-size:31.5px;color:#777">ns</div>
<div class="box" style="left:527.5px;top:520.2px;width:440.5px;height:79.2px;"></div>
<div class="a" style="left:544.8px;top:515.0px;width:122.7px;height:15.0px;background:#fff"></div>
<div class="t" style="left:556.0px;top:508.6px;font-size:23.5px;color:#666;letter-spacing:.2px">End Time</div>
<div class="t" style="left:556.0px;top:545.3px;font-size:31.5px;color:#333;width:334px;overflow:hidden;letter-spacing:.72px">1714513596291626112</div>
<div class="t" style="left:906.0px;top:545.3px;font-size:31.5px;color:#777">ns</div>
<div class="t lbl" style="left:32.0px;top:657.4px;font-size:31px;letter-spacing:-0.45px">Event name</div>
<div class="box" style="left:32.0px;top:712.6px;width:936.0px;height:111.4px;background:#e8f0fe;border-color:#a9b3c6"></div>
<div class="t" style="left:60.7px;top:753.3px;font-size:31.5px;color:#111;letter-spacing:.45px">Left Turn</div>
<div class="t lbl" style="left:32.0px;top:880.8px;font-size:31px;letter-spacing:-0.2px">Description (optional)</div>
<div class="box" style="left:32.0px;top:936.8px;width:936.0px;height:156.8px;"></div>
<div class="t ph" style="left:60.7px;top:976.0px;font-size:31.5px;letter-spacing:.65px">Description</div>
<div class="t lbl" style="left:32.0px;top:1151.5px;font-size:31px;letter-spacing:-0.05px">Tags (optional)</div>
<div class="a" style="left:32.0px;top:1212.7px;width:133.7px;height:62.8px;background:#e2d3c6;border-radius:17px"></div>
<div class="t" style="left:56.0px;top:1229.4px;font-size:26px;color:#333">turn</div>
<svg style="left:115.5px;top:1226.5px" width="36" height="36" viewBox="0 0 36 36"><circle cx="18" cy="18" r="18" fill="#b3a89e"/><path d="M10.5 10.5 L25.5 25.5 M25.5 10.5 L10.5 25.5" stroke="#e2d3c6" stroke-width="4" fill="none"/></svg>
<div class="box" style="left:186.0px;top:1206.0px;width:249.7px;height:74.0px;"></div>
<div class="t ph" style="left:214.4px;top:1225.6px;font-size:30px;">Tag</div>
<svg style="left:452.0px;top:1225.6px" width="36" height="36" viewBox="0 0 36 36"><circle cx="18" cy="18" r="15.2" fill="none" stroke="#2f7fcf" stroke-width="3.4"/><path d="M9.5 18 H26.5 M18 9.5 V26.5" stroke="#2f7fcf" stroke-width="3.6" fill="none"/></svg>
<div class="t lbl" style="left:32.0px;top:1337.4px;font-size:31px;letter-spacing:0.2px">Metadata (optional)</div>
<div class="box" style="left:32.0px;top:1393.6px;width:249.6px;height:74.4px;"></div>
<div class="t ph" style="left:60.7px;top:1414.1px;font-size:30px;">Key</div>
<div class="box" style="left:298.5px;top:1393.6px;width:249.0px;height:74.4px;"></div>
<div class="t ph" style="left:326.6px;top:1414.1px;font-size:30px;">Value</div>
<svg style="left:563.6px;top:1413.0px" width="36" height="36" viewBox="0 0 36 36"><circle cx="18" cy="18" r="15.2" fill="none" stroke="#2f7fcf" stroke-width="3.4"/><path d="M9.5 18 H26.5 M18 9.5 V26.5" stroke="#2f7fcf" stroke-width="3.6" fill="none"/></svg>
<div class="a" style="left:32.0px;top:1501.0px;width:222.0px;height:72.6px;background:#3c84cb;border-radius:8px"></div>
<div class="t" style="left:143.0px;transform:translateX(-50%);top:1523.5px;font-size:27px;color:#fff;font-weight:bold;letter-spacing:-.5px">Create Event</div>
<div class="t" style="left:308.0px;top:1523.1px;font-size:27.5px;color:#2f7fcf;font-weight:bold;letter-spacing:-.85px">Cancel</div>
  </div>
  </div>
  </div>
</div>
</body>
</html>
